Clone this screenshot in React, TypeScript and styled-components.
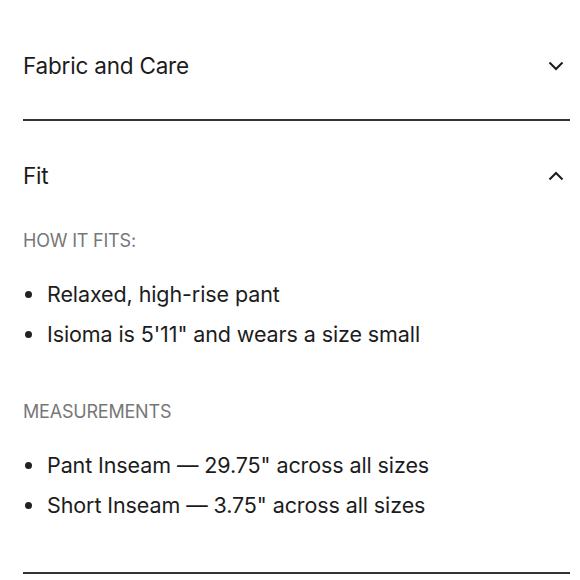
import React, { useState } from "react";
import styled, { createGlobalStyle } from "styled-components";

const Global = createGlobalStyle`
  html, body { margin: 0; padding: 0; background: #fff; }
  body { font-family: Inter, "Noto Sans", "Liberation Sans", sans-serif; color: #1c1c1c; }
  * { box-sizing: border-box; }
`;

const Page = styled.div`
  width: 580px;
  padding: 11px 10px 0 23px;
`;

const Item = styled.section`
  border-bottom: 2px solid #333;
`;

const Header = styled.button<{ $open: boolean }>`
  all: unset;
  display: flex;
  width: 100%;
  align-items: center;
  justify-content: space-between;
  padding: 43px 0 ${(p) => (p.$open ? "0" : "41px")};
  cursor: pointer;
`;

const Title = styled.span`
  font-size: 22.5px;
  line-height: 24px;
  letter-spacing: -0.2px;
  color: #1c1c1c;
`;

const Chevron = styled.svg`
  width: 16px;
  height: 10px;
  margin-right: 6px;
`;

const Body = styled.div`
  padding: 43px 0 47px;
`;

const Label = styled.div<{ $gap?: number }>`
  font-size: 18px;
  line-height: 20px;
  letter-spacing: -0.2px;
  color: #777;
  margin-top: ${(p) => p.$gap ?? 0}px;
`;

const List = styled.ul`
  list-style: none;
  margin: 23px 0 0;
  padding: 0;
`;

const Bullet = styled.li`
  display: flex;
  align-items: center;
  gap: 15px;
  height: 40px;
  font-size: 21.5px;
  letter-spacing: -0.1px;
  color: #1c1c1c;
  &::before {
    content: "";
    width: 7px;
    height: 7px;
    border-radius: 50%;
    background: #222;
    margin-left: 2px;
    flex: none;
  }
`;

const ChevronIcon = ({ up }: { up?: boolean }) => (
  <Chevron viewBox="0 0 16 10" aria-hidden>
    <polyline
      points={up ? "1.5,8.5 8,2 14.5,8.5" : "1.5,1.5 8,8 14.5,1.5"}
      fill="none"
      stroke="#1c1c1c"
      strokeWidth="2"
    />
  </Chevron>
);

export default function App() {
  const [open, setOpen] = useState<Record<string, boolean>>({ fabric: false, fit: true });
  const toggle = (k: string) => setOpen((o) => ({ ...o, [k]: !o[k] }));
  return (
    <>
      <Global />
      <Page>
        <Item>
          <Header $open={open.fabric} onClick={() => toggle("fabric")}>
            <Title>Fabric and Care</Title>
            <ChevronIcon up={open.fabric} />
          </Header>
          {open.fabric && (
            <Body>
              <List>
                <Bullet>Machine wash cold</Bullet>
              </List>
            </Body>
          )}
        </Item>
        <Item>
          <Header $open={open.fit} onClick={() => toggle("fit")}>
            <Title>Fit</Title>
            <ChevronIcon up={open.fit} />
          </Header>
          {open.fit && (
            <Body>
              <Label>HOW IT FITS:</Label>
              <List>
                <Bullet>Relaxed, high-rise pant</Bullet>
                <Bullet>Isioma is 5'11" and wears a size small</Bullet>
              </List>
              <Label $gap={48}>MEASUREMENTS</Label>
              <List>
                <Bullet>Pant Inseam — 29.75" across all sizes</Bullet>
                <Bullet>Short Inseam — 3.75" across all sizes</Bullet>
              </List>
            </Body>
          )}
        </Item>
      </Page>
    </>
  );
}
